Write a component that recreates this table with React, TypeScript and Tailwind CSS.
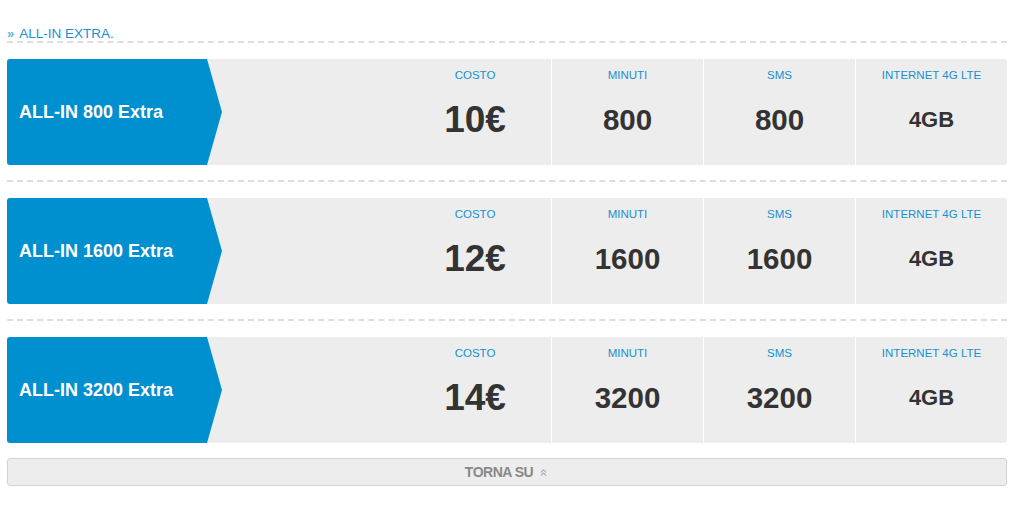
import { ChevronsUp } from 'lucide-react'

interface Plan {
  name: string
  price: string
  minutes: string
  sms: string
  data: string
}

const plans: Plan[] = [
  { name: 'ALL-IN 800 Extra', price: '10€', minutes: '800', sms: '800', data: '4GB' },
  { name: 'ALL-IN 1600 Extra', price: '12€', minutes: '1600', sms: '1600', data: '4GB' },
  { name: 'ALL-IN 3200 Extra', price: '14€', minutes: '3200', sms: '3200', data: '4GB' }
]

function Column({
  label,
  value,
  valueClass,
  divider
}: {
  label: string
  value: string
  valueClass: string
  divider?: boolean
}) {
  return (
    <div
      className={`w-[152px] shrink-0 flex flex-col items-center pt-[9px] pb-[8px] ${
        divider ? 'border-l border-white' : ''
      }`}
    >
      <div className="text-[11.5px] leading-[14px] text-[#1790d0]">{label}</div>
      <div className="flex-1 flex items-center">
        <span className={`font-bold text-[#333333] leading-none ${valueClass}`}>{value}</span>
      </div>
    </div>
  )
}

function PlanCard({ plan }: { plan: Plan }) {
  return (
    <div className="flex h-[106px] rounded-[3px] bg-[#ededed]">
      {/* Blue arrow label */}
      <div className="w-[215px] shrink-0 flex items-center pl-[12px] bg-[#008fcf] rounded-l-[3px] [clip-path:polygon(0_0,200px_0,100%_50%,200px_100%,0_100%)]">
        <span className="text-white font-bold text-[18px] leading-none">{plan.name}</span>
      </div>
      <div className="flex-1" />
      <Column label="COSTO" value={plan.price} valueClass="text-[37px]" />
      <Column label="MINUTI" value={plan.minutes} valueClass="text-[29.5px]" divider />
      <Column label="SMS" value={plan.sms} valueClass="text-[29.5px]" divider />
      <Column label="INTERNET 4G LTE" value={plan.data} valueClass="text-[22px]" divider />
    </div>
  )
}

export default function App() {
  return (
    <div className="min-h-[505px] bg-white font-['Liberation_Sans',Arial,sans-serif]">
      <div className="w-[1000px] ml-[7px]">
        {/* Section title */}
        <div className="pt-[25px] border-b-2 border-dashed border-[#dddddd]">
          <div className="flex items-center gap-[5px] leading-[16px] h-[16px] pt-[1px]">
            <span className="text-[13px] text-[#5cb6e2] font-bold">»</span>
            <span className="text-[13.5px] text-[#1a8fd0]">ALL-IN EXTRA.</span>
          </div>
        </div>

        {plans.map((plan, i) => (
          <div key={plan.name}>
            <div className="mt-[16px]">
              <PlanCard plan={plan} />
            </div>
            {i < plans.length - 1 && (
              <div className="mt-[15px] border-b-2 border-dashed border-[#dddddd]" />
            )}
          </div>
        ))}

        {/* Back to top */}
        <button className="mt-[15px] w-full h-[28px] flex items-center justify-center gap-[5px] rounded-[3px] border border-[#d2d2d2] bg-[#ededed]">
          <span className="text-[14px] font-bold tracking-[-0.5px] text-[#888888]">TORNA SU</span>
          <ChevronsUp size={11} strokeWidth={2.5} className="text-[#9fb4c4]" />
        </button>
      </div>
    </div>
  )
}
